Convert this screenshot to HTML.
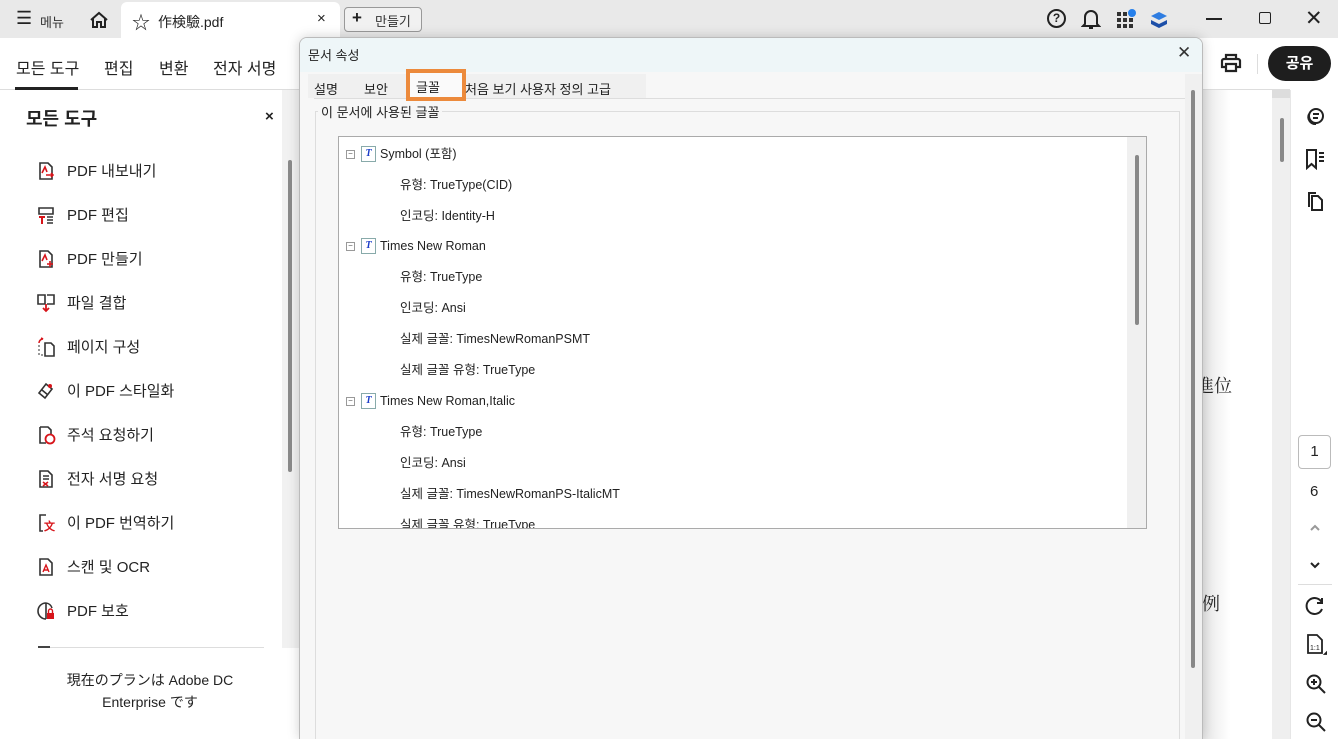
<!DOCTYPE html>
<html><head><meta charset="utf-8"><style>
*{box-sizing:border-box;margin:0;padding:0}
body{width:1338px;height:739px;overflow:hidden;position:relative;background:#fff;font-family:"Liberation Sans","Noto Sans CJK KR",sans-serif;color:#222}
.a{position:absolute}
.top{left:0;top:0;width:1338px;height:38px;background:#e9e9e9}
.t{font-size:14px;white-space:nowrap}
.item{position:absolute;left:36px;font-size:15px;color:#222;display:flex;align-items:center}
.item svg{width:20px;height:20px;margin-right:11px}
.tree{font-size:12.5px;color:#222;position:absolute;white-space:nowrap;line-height:16px;height:16px}
.ico{display:inline-block;width:15px;height:16px;border:1px solid #8aa;background:#fff;color:#1a3cc8;font:bold italic 10px/14px "Liberation Serif",serif;text-align:center;vertical-align:top;margin-right:4px}
.pm{display:inline-block;width:9px;height:9px;border:1px solid #999;font-size:8px;line-height:6px;text-align:center;color:#555;margin-right:6px;vertical-align:top;margin-top:4px}
</style></head><body>
<div class="a top"></div>
<div class="a t" style="left:16px;top:9px;font-size:18px;line-height:18px">☰</div>
<div class="a t" style="left:40px;top:12px;font-size:13px;color:#333">메뉴</div>
<svg class="a" style="left:89px;top:10px" width="20" height="20" viewBox="0 0 20 20" fill="none" stroke="#222" stroke-width="2"><path d="M2 10L10 3l8 7M4 8v9h4v-5h4v5h4V8"/></svg>
<div class="a" style="left:121px;top:2px;width:219px;height:36px;background:#fff;border-radius:6px 6px 0 0"></div>
<div class="a t" style="left:132px;top:9px;font-size:18px">☆</div>
<div class="a t" style="left:158px;top:12px;font-size:14px">作検驗.pdf</div>
<div class="a t" style="left:317px;top:10px;font-size:15px">×</div>
<div class="a" style="left:344px;top:7px;width:78px;height:25px;border:1px solid #999;border-radius:4px;background:#f1f1f1"></div>
<div class="a t" style="left:352px;top:7px;font-size:17px;font-weight:bold;line-height:22px">+</div>
<div class="a t" style="left:375px;top:11px;font-size:13px;color:#333">만들기</div>
<div class="a" style="left:1047px;top:9px;width:19px;height:19px;border:2px solid #222;border-radius:50%;font:bold 12px 'Liberation Sans';text-align:center;line-height:15px">?</div>
<svg class="a" style="left:1081px;top:8px" width="20" height="22" viewBox="0 0 20 22" fill="none" stroke="#222" stroke-width="2"><path d="M4 16V9a6 6 0 0112 0v7l2 2H2zM8 20h4"/></svg>
<svg class="a" style="left:1116px;top:9px" width="20" height="20" viewBox="0 0 20 20" fill="#333"><rect x="1" y="3" width="4" height="4"/><rect x="7" y="3" width="4" height="4"/><rect x="1" y="9" width="4" height="4"/><rect x="7" y="9" width="4" height="4"/><rect x="13" y="9" width="4" height="4"/><rect x="1" y="15" width="4" height="4"/><rect x="7" y="15" width="4" height="4"/><rect x="13" y="15" width="4" height="4"/><circle cx="16" cy="4" r="4" fill="#2680eb"/></svg>
<svg class="a" style="left:1149px;top:10px" width="20" height="20" viewBox="0 0 20 20"><path d="M10 2l8 4-8 4-8-4z" fill="#2f7de1"/><path d="M2 10l8 4 8-4v4l-8 4-8-4z" fill="#1d4fa8"/></svg>
<div class="a" style="left:1206px;top:18px;width:16px;height:2px;background:#222"></div>
<div class="a" style="left:1259px;top:12px;width:12px;height:12px;border:1.5px solid #222;border-radius:2px"></div>
<div class="a t" style="left:1305px;top:6px;font-size:21px">✕</div>
<div class="a" style="left:0;top:89px;width:1290px;height:1px;background:#ddd"></div>
<div class="a t" style="left:16px;top:55px;font-size:16px">모든 도구</div>
<div class="a" style="left:15px;top:87px;width:63px;height:3px;background:#222"></div>
<div class="a t" style="left:104px;top:55px;font-size:16px">편집</div>
<div class="a t" style="left:159px;top:55px;font-size:16px">변환</div>
<div class="a t" style="left:213px;top:55px;font-size:16px">전자 서명</div>
<svg class="a" style="left:1220px;top:52px" width="22" height="22" viewBox="0 0 22 22" fill="none" stroke="#222" stroke-width="2.2"><path d="M6 7V3h10v4M4 7h14a2 2 0 012 2v6h-4M6 15H2V9a2 2 0 012-2M6 12h10v7H6z"/></svg>
<div class="a" style="left:1257px;top:54px;width:1px;height:20px;background:#ddd"></div>
<div class="a" style="left:1268px;top:46px;width:63px;height:35px;border-radius:18px;background:#1e1e1e;color:#fff;font-size:15px;font-weight:bold;text-align:center;line-height:35px">공유</div>
<div class="a t" style="left:26px;top:105px;font-size:18px;font-weight:bold">모든 도구</div>
<div class="a t" style="left:265px;top:108px;font-size:15px;font-weight:bold">×</div>
<div class="a" style="left:282px;top:90px;width:18px;height:649px;background:#f1f1f1"></div>
<div class="a" style="left:288px;top:160px;width:4px;height:312px;background:#8a8a8a;border-radius:2px"></div>
<div class="a" style="left:282px;top:648px;width:18px;height:91px;background:#fff"></div>
<svg width="0" height="0" style="position:absolute"><defs><g id="doc"><path d="M4 2h8l4 4v12H4z" fill="none" stroke="#333" stroke-width="1.6"/></g></defs></svg>
<div class="item" style="top:160px"><svg viewBox="0 0 20 20"><use href="#doc"/><path d="M10 14h7m-2-2l2 2-2 2M6 12l3-6 2 5" stroke="#d7141a" stroke-width="1.6" fill="none"/></svg>PDF 내보내기</div>
<div class="item" style="top:204px"><svg viewBox="0 0 20 20"><path d="M3 3h14v6H3zM11 12h6M11 15h6M11 18h6" stroke="#333" stroke-width="1.6" fill="none"/><path d="M3 12h6M6 12v7" stroke="#d7141a" stroke-width="2"/></svg>PDF 편집</div>
<div class="item" style="top:248px"><svg viewBox="0 0 20 20"><use href="#doc"/><path d="M14 12v6M11 15h6M6 12l3-6 2 5" stroke="#d7141a" stroke-width="1.6" fill="none"/></svg>PDF 만들기</div>
<div class="item" style="top:292px"><svg viewBox="0 0 20 20"><path d="M2 2h7v9H2zM11 2h7v9h-7" stroke="#333" stroke-width="1.6" fill="none"/><path d="M10 11v7m-3-3l3 3 3-3" stroke="#d7141a" stroke-width="1.8" fill="none"/></svg>파일 결합</div>
<div class="item" style="top:336px"><svg viewBox="0 0 20 20"><path d="M9 6h6l3 3v10H9z" stroke="#333" stroke-width="1.6" fill="none"/><path d="M3 8v10h4" stroke="#333" stroke-dasharray="2 2" fill="none"/><path d="M3 6a4 4 0 014-4l-2-1" stroke="#d7141a" stroke-width="1.6" fill="none"/></svg>페이지 구성</div>
<div class="item" style="top:380px"><svg viewBox="0 0 20 20"><path d="M3 12l7-9 6 5-7 9zM6 9l6 5" stroke="#333" stroke-width="1.6" fill="none"/><circle cx="14" cy="5" r="2" fill="#d7141a"/></svg>이 PDF 스타일화</div>
<div class="item" style="top:424px"><svg viewBox="0 0 20 20"><path d="M4 2h8l3 3v4M4 2v16h6" stroke="#333" stroke-width="1.6" fill="none"/><circle cx="14" cy="14" r="4.5" stroke="#d7141a" stroke-width="1.8" fill="none"/></svg>주석 요청하기</div>
<div class="item" style="top:468px"><svg viewBox="0 0 20 20"><path d="M4 2h8l4 4v12H4zM7 7h6M7 10h6" stroke="#333" stroke-width="1.6" fill="none"/><path d="M7 13l5 4M12 13l-5 4" stroke="#d7141a" stroke-width="1.6"/></svg>전자 서명 요청</div>
<div class="item" style="top:512px"><svg viewBox="0 0 20 20"><path d="M10 2H4v16h3" stroke="#333" stroke-width="1.6" fill="none"/><text x="8" y="17" font-size="11" font-weight="bold" fill="#d7141a" font-family="Liberation Sans">文</text></svg>이 PDF 번역하기</div>
<div class="item" style="top:556px"><svg viewBox="0 0 20 20"><use href="#doc"/><path d="M7 15l3-7 3 7M8 13h4" stroke="#d7141a" stroke-width="1.4" fill="none"/></svg>스캔 및 OCR</div>
<div class="item" style="top:600px"><svg viewBox="0 0 20 20"><path d="M10 2a7 7 0 000 16M10 2v16M10 2a7 7 0 016 5" stroke="#333" stroke-width="1.6" fill="none"/><rect x="11" y="12" width="7" height="6" fill="#d7141a"/><path d="M12.5 12v-2a2 2 0 014 0v2" stroke="#d7141a" stroke-width="1.4" fill="none"/></svg>PDF 보호</div>
<div class="a" style="left:38px;top:647px;width:226px;height:1px;background:#ddd"></div>
<div class="a" style="left:38px;top:646px;width:12px;height:2px;background:#444"></div>
<div class="a" style="left:0;top:669px;width:300px;text-align:center;font-size:14px;line-height:22px;font-family:'Liberation Sans','Noto Sans CJK JP',sans-serif">現在のプランは Adobe DC<br>Enterprise です</div>
<div class="a" style="left:1202px;top:90px;width:70px;height:649px;background:linear-gradient(90deg,#e6e6e6,#fff 40%)"></div>
<div class="a" style="left:1272px;top:90px;width:18px;height:649px;background:#efefef"></div>
<div class="a" style="left:1272px;top:90px;width:18px;height:8px;background:#ddd"></div>
<div class="a" style="left:1280px;top:118px;width:4px;height:44px;background:#888;border-radius:2px"></div>
<div class="a" style="left:1290px;top:90px;width:1px;height:649px;background:#e6e6e6"></div>
<div class="a t" style="left:1196px;top:372px;font-size:18px;font-family:'Liberation Serif','Noto Serif CJK SC',serif">進位</div>
<div class="a t" style="left:1202px;top:590px;font-size:18px;font-family:'Liberation Serif','Noto Serif CJK SC',serif">例</div>
<svg class="a" style="left:1303px;top:106px" width="22" height="22" viewBox="0 0 22 22" fill="none" stroke="#222" stroke-width="2"><circle cx="13" cy="10" r="7"/><path d="M6 8a7 7 0 007 10M10 8h6M10 12h5"/></svg>
<svg class="a" style="left:1304px;top:148px" width="22" height="22" viewBox="0 0 22 22" fill="none" stroke="#222" stroke-width="2"><path d="M3 2h9v18l-4.5-4L3 20zM15 5h5M15 9h5M15 13h5"/></svg>
<svg class="a" style="left:1304px;top:190px" width="22" height="22" viewBox="0 0 22 22" fill="none" stroke="#222" stroke-width="2"><path d="M8 6h6l4 4v10H8zM5 17V3h7"/></svg>
<div class="a" style="left:1298px;top:435px;width:33px;height:34px;border:1px solid #bbb;border-radius:4px;text-align:center;line-height:32px;font-size:15px">1</div>
<div class="a t" style="left:1310px;top:483px;font-size:15px">6</div>
<svg class="a" style="left:1309px;top:523px" width="12" height="10" viewBox="0 0 12 10" fill="none" stroke="#999" stroke-width="2"><path d="M2 7l4-4 4 4"/></svg>
<svg class="a" style="left:1309px;top:560px" width="12" height="10" viewBox="0 0 12 10" fill="none" stroke="#222" stroke-width="2"><path d="M2 3l4 4 4-4"/></svg>
<div class="a" style="left:1298px;top:584px;width:34px;height:1px;background:#ddd"></div>
<svg class="a" style="left:1304px;top:595px" width="22" height="22" viewBox="0 0 22 22" fill="none" stroke="#222" stroke-width="2"><path d="M18 8a8 8 0 100 6M18 3v5h-5"/></svg>
<svg class="a" style="left:1305px;top:633px" width="22" height="24" viewBox="0 0 22 24" fill="none" stroke="#222" stroke-width="1.8"><path d="M3 2h9l5 5v13H3z"/><text x="5" y="17" font-size="7" fill="#222" stroke="none" font-family="Liberation Sans">1:1</text><path d="M20 21l2-2v2z" fill="#222"/></svg>
<svg class="a" style="left:1305px;top:673px" width="22" height="22" viewBox="0 0 22 22" fill="none" stroke="#222" stroke-width="2"><circle cx="9" cy="9" r="6.5"/><path d="M14 14l6 6M9 6v6M6 9h6"/></svg>
<svg class="a" style="left:1305px;top:711px" width="22" height="22" viewBox="0 0 22 22" fill="none" stroke="#222" stroke-width="2"><circle cx="9" cy="9" r="6.5"/><path d="M14 14l6 6M6 9h6"/></svg>
<div class="a" style="left:299px;top:37px;width:904px;height:702px;border:1px solid #bbb;border-bottom:none;border-radius:8px 8px 0 0;background:#f7f7f7;box-shadow:0 0 12px rgba(0,0,0,.18);overflow:hidden">
 <div class="a" style="left:0;top:0;width:904px;height:34px;background:#eef6f8"></div>
 <div class="a t" style="left:8px;top:7px;font-size:13px">문서 속성</div>
 <div class="a t" style="left:877px;top:5px;font-size:17px;color:#333">✕</div>
 <div class="a" style="left:14px;top:60px;width:872px;height:1px;background:#ddd"></div>
 <div class="a" style="left:8px;top:36px;width:338px;height:24px;background:#f0f0f0"></div>
 <div class="a t" style="left:14px;top:41px;font-size:13px">설명</div>
 <div class="a t" style="left:64px;top:41px;font-size:13px">보안</div>
 <div class="a" style="left:106px;top:31px;width:60px;height:32px;border:4px solid #ec8a3c;background:#fafafa"></div>
 <div class="a t" style="left:116px;top:39px;font-size:13px">글꼴</div>
 <div class="a t" style="left:165px;top:41px;font-size:13px">처음 보기 사용자 정의 고급</div>
 <div class="a" style="left:15px;top:73px;width:865px;height:640px;border:1px solid #ddd"></div>
 <div class="a t" style="left:18px;top:64px;font-size:13px;background:#f7f7f7;padding:0 3px">이 문서에 사용된 글꼴</div>
 <div class="a" style="left:38px;top:98px;width:809px;height:393px;border:1px solid #aaa;background:#fff;overflow:hidden">
  <div class="a" style="left:788px;top:0;width:19px;height:393px;background:#f0f0f0"></div>
  <div class="a" style="left:796px;top:18px;width:4px;height:170px;background:#888;border-radius:2px"></div>
  <div class="tree" style="left:7px;top:9px"><span class="pm">−</span><span class="ico">T</span>Symbol (포함)</div>
  <div class="tree" style="left:61px;top:40px">유형: TrueType(CID)</div>
  <div class="tree" style="left:61px;top:71px">인코딩: Identity-H</div>
  <div class="tree" style="left:7px;top:101px"><span class="pm">−</span><span class="ico">T</span>Times New Roman</div>
  <div class="tree" style="left:61px;top:132px">유형: TrueType</div>
  <div class="tree" style="left:61px;top:163px">인코딩: Ansi</div>
  <div class="tree" style="left:61px;top:194px">실제 글꼴: TimesNewRomanPSMT</div>
  <div class="tree" style="left:61px;top:225px">실제 글꼴 유형: TrueType</div>
  <div class="tree" style="left:7px;top:256px"><span class="pm">−</span><span class="ico">T</span>Times New Roman,Italic</div>
  <div class="tree" style="left:61px;top:287px">유형: TrueType</div>
  <div class="tree" style="left:61px;top:318px">인코딩: Ansi</div>
  <div class="tree" style="left:61px;top:349px">실제 글꼴: TimesNewRomanPS-ItalicMT</div>
  <div class="tree" style="left:61px;top:380px">실제 글꼴 유형: TrueType</div>
 </div>
 <div class="a" style="left:885px;top:36px;width:18px;height:666px;background:#f0f0f0"></div>
 <div class="a" style="left:891px;top:52px;width:4px;height:578px;background:#888;border-radius:2px"></div>
</div>
</body></html>
